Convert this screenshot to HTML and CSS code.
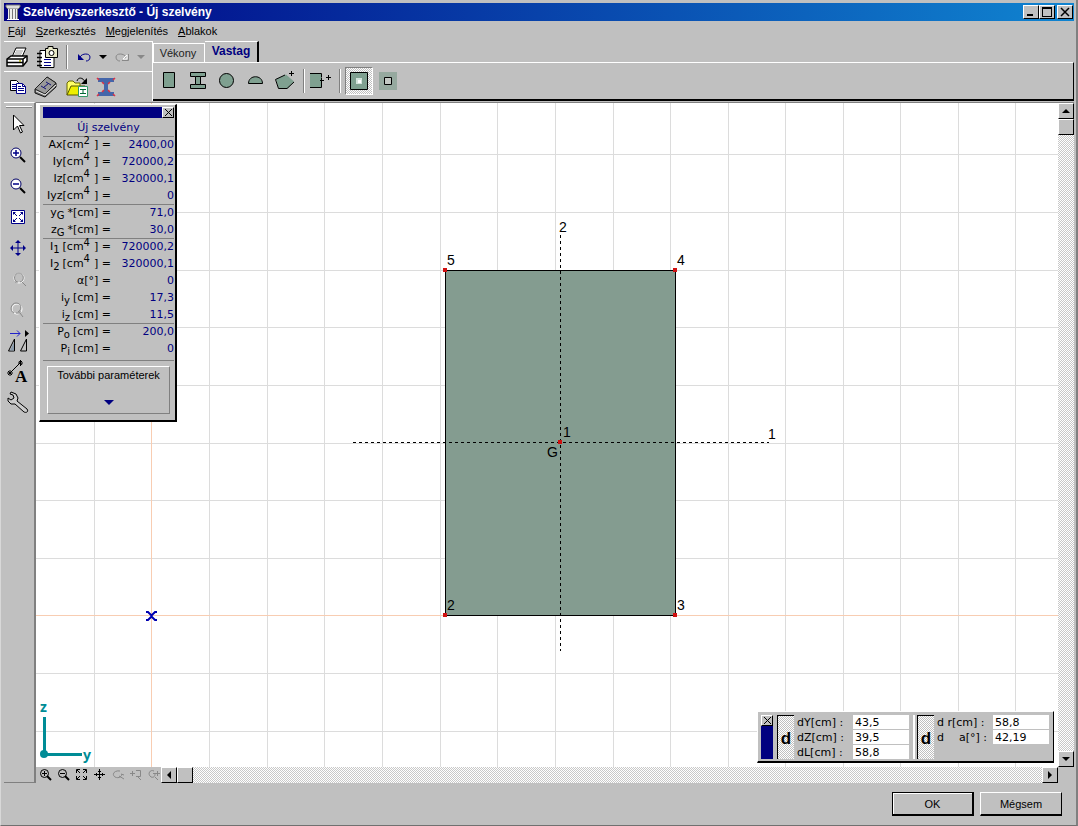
FILE: index.html
```html
<!DOCTYPE html>
<html lang="hu">
<head>
    <meta charset="UTF-8">
    <meta name="viewport" content="width=device-width, initial-scale=1.0">
    <title>Szelvényszerkesztő - Új szelvény</title>
    <link rel="stylesheet" href="styles.css">
</head>
<body>

<header class="titlebar">
    <svg class="app-icon" width="16" height="16" viewBox="0 0 16 16">
        <path d="M1 1h14v2l-2 2H3L1 3z" fill="#ddd" stroke="#777"/>
        <path d="M3 5h10v10H3z" fill="#eee"/>
        <path d="M4.5 5v10M7.5 5v10M10.5 5v10M12.5 5v10" stroke="#777"/>
        <path d="M2 15.500h12" stroke="#fff"/>
    </svg>
    <h1>Szelvényszerkesztő - Új szelvény</h1>
    <div class="window-buttons">
        <button aria-label="Kis méret"><svg width="12" height="10"><path d="M2 7h6v2H2z"/></svg></button>
        <button aria-label="Teljes méret"><svg width="12" height="10"><path d="M1 0h10v10H1zM2 2v7h8V2z" fill-rule="evenodd"/></svg></button>
        <button class="close" aria-label="Bezárás"><svg width="12" height="10"><path d="M2 1l8 8M10 1L2 9" stroke="#000" stroke-width="1.500"/></svg></button>
    </div>
</header>

<nav class="menu">
    <button><u>F</u>ájl</button>
    <button><u>S</u>zerkesztés</button>
    <button><u>M</u>egjelenítés</button>
    <button><u>A</u>blakok</button>
</nav>

<div class="toolbars">
    <div class="main-tools">
        <div class="tool-row">
            <button aria-label="Nyomtatás">
                <svg width="22" height="20" viewBox="0 0 22 20">
                    <path d="M6 10l4-9h10l-4 9z" fill="#fff" stroke="#000"/>
                    <path d="M10 4h7M9 6h7M8 8h7" stroke="#999"/>
                    <path d="M1 12l4-3h16v5l-4 5H1z" fill="#fff" stroke="#000" stroke-width="1.500"/>
                    <path d="M1 12h16l4-3M17 12v7M1 15.500h16" fill="none" stroke="#000" stroke-width="1.500"/>
                    <path d="M13 14h2" stroke="#aa0" stroke-width="1.500"/>
                </svg>
            </button>
            <button aria-label="Rajz mentése">
                <svg width="22" height="22" viewBox="0 0 22 22">
                    <path d="M4 4.500h14v17H4z" fill="#fff" stroke="#000"/>
                    <path d="M1 7.500h5M1 11.500h5M1 15.500h5M1 19.500h5" stroke="#000" stroke-width="1.500"/>
                    <path d="M8 13.500h7M8 16.500h7M8 19.500h7" stroke="#008"/>
                    <path d="M9.500 2.500H12v-2h5v2h4.500v9h-12z" fill="#e8e8c8" stroke="#000"/>
                    <circle cx="15.500" cy="7" r="2.500" fill="#fff" stroke="#000"/>
                </svg>
            </button>
            <span class="separator"></span>
            <button class="undo" aria-label="Visszavonás">
                <svg width="14" height="10" viewBox="0 0 14 10">
                    <path d="M3 5c2-4 10-4 10 0 0 3-2 4-4 4" fill="none" stroke="#008"/>
                    <path d="M1 2v6h6z" fill="#008"/>
                </svg>
            </button>
            <button aria-label="Visszavonás lista"><svg width="8" height="4"><path d="M0 0h8L4 4z"/></svg></button>
            <button class="redo" aria-label="Újra">
                <svg width="14" height="10" viewBox="0 0 14 10">
                    <path d="M11 5C9 1 1 1 1 5c0 3 2 4 4 4" fill="none" stroke="#888"/>
                    <path d="M12 3v4H8z" fill="#aaa" stroke="#fff"/>
                    <path d="M13.500 2v6.500H7" fill="none" stroke="#888"/>
                </svg>
            </button>
            <button aria-label="Újra lista"><svg width="8" height="4"><path d="M0 0h8L4 4z" fill="#888"/></svg></button>
        </div>
        <div class="tool-row second">
            <button aria-label="Másolás">
                <svg width="16" height="14" viewBox="0 0 16 14">
                    <path d="M.5.500h6l2 2v8h-8z" fill="#fff" stroke="#000"/>
                    <path d="M2 4.500h4M2 6.500h4M2 8.500h4" stroke="#008"/>
                    <path d="M6.500 3.500h6l3 3v7h-9z" fill="#fff" stroke="#008"/>
                    <path d="M12.500 4v2.500h3M8 6.500h3M8 8.500h6M8 10.500h6" fill="none" stroke="#008"/>
                </svg>
            </button>
            <button aria-label="Szelvénytár">
                <svg width="24" height="22" viewBox="0 0 24 22">
                    <path d="M1 13L13 1l9 6v4L11 21 1 17z" fill="#777" stroke="#111"/>
                    <path d="M1 13L13 1l9 6-11 11z" fill="#999" stroke="#222"/>
                    <path d="M2 15l9 4L22 9" fill="none" stroke="#eee"/>
                    <path d="M12 6l5 3M7 10l5 3M14.500 7.500l-5 4" stroke="#117"/>
                </svg>
            </button>
            <button aria-label="Szelvény betöltése">
                <svg width="22" height="20" viewBox="0 0 22 20">
                    <path d="M1 18V6l2-2h4l2 2h5v3" fill="#ff6" stroke="#660"/>
                    <path d="M1 18L5 9h14l-5 9z" fill="#ee0" stroke="#550"/>
                    <path d="M11 4c1-4 6-4 8 1" fill="none" stroke="#000"/>
                    <path d="M21 1v6h-6z"/>
                    <path d="M12.500 9.500h9v10h-9z" fill="#fff" stroke="#396"/>
                    <path d="M14 12.500h6M14 16.500h6M17 12v5" stroke="#063"/>
                </svg>
            </button>
            <button aria-label="I szelvény">
                <svg width="20" height="20" viewBox="0 0 20 20">
                    <path d="M2 1h16v4h-4l-2 2v6l2 2h4v4H2v-4h4l2-2V7L6 5H2z" fill="#46a"/>
                    <path d="M1 1l2 2M19 1l-2 2M1 19l2-2M19 19l-2-2M6 5l2 2M14 5l-2 2M6 15l2-2M14 15l-2-2" stroke="#d34" stroke-width="1.500"/>
                </svg>
            </button>
        </div>
    </div>

    <div class="section-tools">
        <div class="tabs" role="tablist">
            <button class="tab" role="tab">Vékony</button>
            <button class="tab active" role="tab" aria-selected="true">Vastag</button>
        </div>
        <div class="tab-panel">
            <div class="shapes">
                <button aria-label="Téglalap"><svg width="20" height="20"><path d="M4.500 1.500h11v15h-11z"/></svg></button>
                <button aria-label="I alak"><svg width="20" height="20"><path d="M2.500 1.500h15v4h-5v8h5v4h-15v-4h5v-8h-5zM7.500 5.500h5M7.500 13.500h5"/></svg></button>
                <button aria-label="Kör"><svg width="20" height="20"><circle cx="9.500" cy="9.500" r="7"/></svg></button>
                <button aria-label="Félkör"><svg width="20" height="20"><path d="M2.500 12.500c0-9 14-9 14 0z"/></svg></button>
                <button aria-label="Sokszög"><svg width="20" height="20"><path d="M1 8l10-4.500 8 7-6 7H3.500z" stroke="none"/><path d="M10 4L.5 8.500l3 9H12l7-6.500" fill="none"/><path d="M16.500 0v5M14 2.500h5"/></svg></button>
            </div>
            <span class="separator"></span>
            <button class="shape-add" aria-label="Szelvény hozzáadása"><svg width="22" height="20"><path d="M1 3h11v14H1z" stroke="none"/><path d="M1 2.500h11.500v4M12.500 12v4.500H1" fill="none"/><path d="M12.500 7v5M11 9.500h4M17 6.500h5M19.500 4v5"/></svg></button>
            <span class="separator"></span>
            <button class="mode pressed" aria-label="Tömör"><svg width="18" height="18"><path d="M.5.500h17v17H.5z"/><path d="M6 6h6v6H6z" fill="#d4e4dc" stroke="none"/><path d="M8 8h3v3H8z" fill="#fff" stroke="none"/></svg></button>
            <button class="mode" aria-label="Lyuk"><svg width="18" height="18"><path d="M0 0h18v18H0z" fill="#96a99f" stroke="none"/><path d="M5.500 5.500h7v7h-7z" fill="#c4c8c4"/></svg></button>
        </div>
    </div>
</div>

<main class="workspace">
    <div class="side-tools">
        <button aria-label="Kijelölés"><svg width="22" height="22"><path d="M6.500 2v15l4-4 3 7 2-1-3-6.500H17z" fill="#fff" stroke="#000"/></svg></button>
        <button aria-label="Nagyítás"><svg width="22" height="22"><circle cx="9" cy="9" r="5" fill="#fff" stroke="#006"/><path d="M13 13l5 5" stroke="#000" stroke-width="2"/><path d="M6 9h6M9 6v6" stroke="#008" stroke-width="1.500"/></svg></button>
        <button aria-label="Kicsinyítés"><svg width="22" height="22"><circle cx="9" cy="9" r="5" fill="#fff" stroke="#006"/><path d="M13 13l5 5" stroke="#000" stroke-width="2"/><path d="M6 9h6" stroke="#008" stroke-width="1.500"/></svg></button>
        <button aria-label="Teljes nézet"><svg width="22" height="22"><path d="M4.500 4.500h13v13h-13z" fill="#fff" stroke="#008"/><path d="M6 6h3L6 9zM16 6v3l-3-3zM6 16v-3l3 3zM16 16h-3l3-3z" fill="#008"/><path d="M7 7l3 3M15 7l-3 3M7 15l3-3M15 15l-3-3" stroke="#008"/></svg></button>
        <button aria-label="Eltolás"><svg width="22" height="22"><path d="M11 4v14M4 11h14" stroke="#008"/><path d="M11 3l3 3H8zM11 19l-3-3h6zM3 11l3-3v6zM19 11l-3 3V8z" fill="#008"/></svg></button>
        <button aria-label="Előző nézet"><svg width="22" height="22"><circle cx="12" cy="10" r="5" fill="none" stroke="#fff"/><path d="M10 14c-4-2-3-9 2-9s6 8 1 9M8 14h3M15 14l4 4" fill="none" stroke="#888"/></svg></button>
        <button aria-label="Következő nézet"><svg width="22" height="22"><circle cx="10" cy="10" r="5" fill="none" stroke="#fff"/><path d="M7 14c-5-2-3-10 2-10 6 0 6 7 2 9M9 14h4v-2M13 14l3 4" fill="none" stroke="#888"/></svg></button>
        <button aria-label="Tükrözés"><svg width="24" height="26"><path d="M4 5.500h10M11 2.500l3 3-3 3" fill="none" stroke="#22c"/><path d="M19 2l4 3.500-4 3.500z"/><path d="M8.500 11v12h-6zM20.500 11v12h-6z" fill="none" stroke="#000"/><path d="M8 14v8.500H4z" fill="#89a"/></svg></button>
        <button aria-label="Méretvonal"><svg width="24" height="26"><path d="M4 14L14 4M1 14h6M4 11v6M2 12l4 4M6 12l-4 4M12 4h5M14.500 1v6M13 2l3 4M16 2l-4 4" stroke="#000"/><text x="9" y="23" class="letter-icon">A</text></svg></button>
        <button aria-label="Beállítások"><svg width="24" height="24"><path d="M5 1l5 2 2 4-1 3 10 8c2 3-1 4-3 3L9 13H5L2 10V7l3 2 3-2-1-3-3-1z" fill="#ccc" stroke="#000"/></svg></button>
    </div>

    <div class="view">
        <div class="drawing">
            <svg class="canvas" width="100%" height="100%">
                <path class="grid" d="M58.500 0v2000M173.500 0v2000M231.500 0v2000M288.500 0v2000M346.500 0v2000M404.500 0v2000M461.500 0v2000M519.500 0v2000M577.500 0v2000M634.500 0v2000M692.500 0v2000M749.500 0v2000M807.500 0v2000M864.500 0v2000M922.500 0v2000M979.500 0v2000"/>
                <path class="grid" d="M0 51.500h3000M0 109.500h3000M0 167.500h3000M0 224.500h3000M0 282.500h3000M0 340.500h3000M0 397.500h3000M0 455.500h3000M0 570.500h3000M0 628.500h3000"/>
                <path class="origin" d="M115.500 0v2000M0 512.500h3000"/>

                <path class="cross" d="M110 509h2l3 3h1l3-3h2M110 517h2l3-3h1l3 3h2"/>
                <rect class="section" x="409.500" y="167.500" width="230" height="345"/>
                <path class="axis" d="M317 339.500h416M524.500 132v416"/>
                <path class="node" d="M407 165h4v4h-4zM637 165h4v4h-4zM407 510h4v4h-4zM637 510h4v4h-4zM522 337h4v4h-4z"/>
                <g class="labels">
                    <text x="523" y="129">2</text>
                    <text x="411" y="162">5</text>
                    <text x="641" y="162">4</text>
                    <text x="411" y="507">2</text>
                    <text x="641" y="507">3</text>
                    <text x="527" y="334">1</text>
                    <text x="511" y="354">G</text>
                    <text x="732" y="336">1</text>
                </g>
            </svg>

            <svg class="axes" width="64" height="80">
                <path d="M8.500 30v38M8 67.500h38" stroke="#008c96" stroke-width="3"/>
                <circle cx="8" cy="67" r="4" fill="#008c96"/>
                <text x="4" y="25">z</text>
                <text x="47" y="73">y</text>
            </svg>

            <section class="params">
                <div class="panel-bar"><button aria-label="Panel bezárása"><svg width="9" height="9"><path d="M1 1l7 7M8 1L1 8" stroke="#000"/></svg></button></div>
                <h2>Új szelvény</h2>
                <table>
                    <tbody>
                        <tr><th>Ax[cm<sup>2</sup>] =</th><td>2400,00</td></tr>
                        <tr><th>Iy[cm<sup>4</sup>] =</th><td>720000,2</td></tr>
                        <tr><th>Iz[cm<sup>4</sup>] =</th><td>320000,1</td></tr>
                        <tr><th>Iyz[cm<sup>4</sup>] =</th><td>0</td></tr>
                    </tbody>
                    <tbody>
                        <tr><th>y<sub>G</sub>*[cm] =</th><td>71,0</td></tr>
                        <tr><th>z<sub>G</sub>*[cm] =</th><td>30,0</td></tr>
                    </tbody>
                    <tbody>
                        <tr><th>I<sub>1</sub>[cm<sup>4</sup>] =</th><td>720000,2</td></tr>
                        <tr><th>I<sub>2</sub>[cm<sup>4</sup>] =</th><td>320000,1</td></tr>
                        <tr><th>α[°] =</th><td>0</td></tr>
                        <tr><th>i<sub>y</sub>[cm] =</th><td>17,3</td></tr>
                        <tr><th>i<sub>z</sub>[cm] =</th><td>11,5</td></tr>
                    </tbody>
                    <tbody>
                        <tr><th>P<sub>o</sub>[cm] =</th><td>200,0</td></tr>
                        <tr><th>P<sub>i</sub>[cm] =</th><td>0</td></tr>
                    </tbody>
                </table>
                <div class="more">
                    <button>További paraméterek<svg width="10" height="5"><path d="M0 0h10L5 5z" fill="#000080"/></svg></button>
                </div>
            </section>

            <section class="coords">
                <div class="coords-bar"><button aria-label="Koordináták bezárása"><svg width="9" height="9"><path d="M1 1l7 7M8 1L1 8" stroke="#000"/></svg></button></div>
                <div class="coord-group">
                    <button class="delta">d</button>
                    <div class="fields">
                        <label for="dy">dY[cm] :</label><input id="dy" type="text" value="43,5">
                        <label for="dz">dZ[cm] :</label><input id="dz" type="text" value="39,5">
                        <label for="dl">dL[cm] :</label><input id="dl" type="text" value="58,8">
                    </div>
                </div>
                <div class="coord-group polar">
                    <button class="delta">d</button>
                    <div class="fields">
                        <label for="dr">d r[cm] :</label><input id="dr" type="text" value="58,8">
                        <label for="da"><span>d</span><span>a[°] :</span></label><input id="da" type="text" value="42,19">
                    </div>
                </div>
            </section>
        </div>

        <div class="scroll-y">
            <button aria-label="Fel"><svg width="8" height="4"><path d="M0 4h8L4 0z"/></svg></button>
            <span class="thumb"></span>
            <button class="last" aria-label="Le"><svg width="8" height="4"><path d="M0 0h8L4 4z"/></svg></button>
        </div>

        <div class="bottom-bar">
            <div class="view-tools">
                <button aria-label="Nagyítás"><svg width="12" height="12"><circle cx="4.500" cy="4.500" r="4"/><path d="M2 4.500h5M4.500 2v5"/><path d="M7 7l4 4" stroke-width="2"/></svg></button>
                <button aria-label="Kicsinyítés"><svg width="12" height="12"><circle cx="4.500" cy="4.500" r="4"/><path d="M2 4.500h5"/><path d="M7 7l4 4" stroke-width="2"/></svg></button>
                <button aria-label="Teljes nézet"><svg width="12" height="12"><path d="M.5 4V.5H4M7 .5h3.500V4M10.500 7v3.500H7M4 10.500H.5V7M1 1l3 3M10 1L7 4M10 10L7 7M1 10l3-3"/></svg></button>
                <button aria-label="Eltolás"><svg width="12" height="12"><path d="M5.500 0v11M0 5.500h11M4 2.500h3M4 8.500h3M2.500 4v3M8.500 4v3"/></svg></button>
                <button class="off" aria-label="Forgatás"><svg width="12" height="12"><path d="M8 2C3 1-1 5 3 8c4 2 7-1 7-3M7 7l5 3M9 5l3 1"/></svg></button>
                <button class="off" aria-label="Előző"><svg width="12" height="12"><path d="M0 4.500h5M2.500 2v5M6 1.500h4.500v6H6M8 8l3 3"/></svg></button>
                <button class="off" aria-label="Következő"><svg width="12" height="12"><path d="M6 2C2 0-1 5 3 8c3 1 4-1 4-3M5 4.500h7M9.500 2v5M7 8l3 3"/></svg></button>
            </div>
            <div class="scroll-x">
                <button aria-label="Balra"><svg width="4" height="8"><path d="M4 0v8L0 4z"/></svg></button>
                <span class="thumb"></span>
                <button class="last" aria-label="Jobbra"><svg width="4" height="8"><path d="M0 0v8l4-4z"/></svg></button>
            </div>
        </div>
        <div class="corner"></div>
    </div>
</main>

<footer class="dialog-buttons">
    <button class="default">OK</button>
    <button>Mégsem</button>
</footer>

</body>
</html>
```

FILE: styles.css
```css
* {
    box-sizing: border-box;
}

body {
    margin: 0;
    padding: 3px 2px 0 3px;
    display: flex;
    flex-direction: column;
    height: 100vh;
    overflow: hidden;
    background-color: #c0c0c0;
    border-left: 1px solid #d8d8d8;
    border-right: 2px solid #808080;
    border-bottom: 1px solid #707070;
    font-family: "Liberation Sans", Arial, sans-serif;
    font-size: 11px;
    color: #000;
}

button {
    display: flex;
    align-items: center;
    justify-content: center;
    padding: 0;
    border: none;
    background: none;
    font: inherit;
    color: inherit;
}

svg {
    display: block;
    flex: none;
}

/* Title bar and menu */
.titlebar {
    display: flex;
    align-items: center;
    height: 18px;
    padding: 0 1px;
    background: linear-gradient(to right, #000084, #1084d0);
    color: #fff;
}

.titlebar h1 {
    flex: 1;
    margin: 0 0 0 2px;
    font-size: 12px;
    line-height: 18px;
}

.window-buttons {
    display: flex;
}

.window-buttons button {
    width: 16px;
    height: 14px;
    background-color: #c0c0c0;
    border: 1px solid;
    border-color: #fff #000 #000 #fff;
}

.window-buttons .close {
    margin-left: 2px;
}

.menu {
    display: flex;
    gap: 10px;
    height: 20px;
    padding-left: 4px;
}

/* Toolbars */
.toolbars {
    display: flex;
    height: 61px;
}

.main-tools {
    width: 148px;
    border-top: 1px solid #fff;
}

.tool-row {
    display: flex;
    align-items: center;
    gap: 8px;
    height: 29px;
    padding-left: 2px;
}

.tool-row.second {
    border-top: 1px solid #fff;
    padding-left: 6px;
    height: 30px;
}

.separator {
    width: 2px;
    height: 24px;
    border-left: 1px solid #808080;
    border-right: 1px solid #fff;
}

.tool-row .undo {
    margin-left: 1px;
}

.section-tools {
    flex: 1;
    display: flex;
    flex-direction: column;
    height: 60px;
    border-left: 1px solid #fff;
}

.tabs {
    display: flex;
    align-items: flex-end;
    height: 21px;
}

.tab {
    width: 52px;
    height: 19px;
    padding-right: 2px;
    border: 1px solid #fff;
    border-bottom: none;
    color: #222;
}

.tab.active {
    width: 54px;
    height: 21px;
    padding: 0 0 3px;
    border-left: none;
    border-right: 2px solid #000;
    color: #000080;
    font-size: 12px;
    font-weight: bold;
}

.tab-panel {
    flex: 1;
    display: flex;
    align-items: center;
    gap: 4px;
    padding-left: 6px;
    border-top: 1px solid #fff;
    border-right: 1px solid #000;
    border-bottom: 2px solid #000;
}

.tab-panel svg {
    fill: #7fa090;
    stroke: #000;
}

.shapes {
    display: flex;
    gap: 9px;
    margin-right: 4px;
}

.shape-add {
    margin-right: 4px;
}

.mode {
    width: 28px;
    height: 28px;
}

.mode.pressed {
    border: 1px solid;
    border-color: #808080 #fff #fff #808080;
    background: repeating-conic-gradient(#fff 0 25%, #c0c0c0 0 50%) 0 0 / 2px 2px;
}

.mode.pressed + .mode {
    width: 22px;
}

/* Workspace */
.workspace {
    flex: 1;
    display: flex;
    min-height: 0;
}

.side-tools {
    display: flex;
    flex-direction: column;
    align-items: center;
    width: 32px;
    padding: 5px 2px 0 0;
    border-top: 1px solid #fff;
    border-right: 2px solid #808080;
    border-bottom: 1px solid #808080;
    background:
        linear-gradient(#fff 1px, transparent 1px) 2px 3px / 26px 2px no-repeat,
        linear-gradient(#888 1px, transparent 1px) 2px 4px / 26px 2px no-repeat;
}

.side-tools button {
    width: 28px;
    height: 31px;
}

.letter-icon {
    font-family: "Liberation Serif", serif;
    font-size: 17px;
    font-weight: bold;
}

.view {
    flex: 1;
    display: grid;
    grid-template-columns: 1fr 16px;
    grid-template-rows: 1fr 16px;
    border-top: 1px solid #808080;
}

.drawing {
    position: relative;
    overflow: hidden;
    background-color: #fff;
}

.canvas {
    position: absolute;
}

.grid {
    stroke: #dcdcdc;
}

.origin {
    fill: none;
    stroke: #f8cdb2;
}

.cross {
    fill: none;
    stroke: #0000b0;
    stroke-width: 2;
}

.section {
    fill: #849c90;
    stroke: #000;
}

.axis {
    stroke: #000;
    stroke-dasharray: 3 3;
}

.node {
    fill: #d01010;
}

.labels {
    font-size: 14px;
}

.axes {
    position: absolute;
    left: 0;
    bottom: 0;
    fill: #008c96;
    font: bold 14px "Noto Sans", sans-serif;
}

/* Cross-section parameters */
.params {
    position: absolute;
    left: 3px;
    top: 1px;
    width: 138px;
    padding: 2px 1px 6px 3px;
    background-color: #c0c0c0;
    border: 1px solid;
    border-color: #fff #000 #000 #fff;
    border-right-width: 2px;
    border-bottom-width: 2px;
    font-family: "DejaVu Sans", Verdana, sans-serif;
    font-size: 11px;
}

.panel-bar {
    display: flex;
    justify-content: flex-end;
    height: 11px;
    background-color: #000080;
}

.panel-bar button,
.coords-bar button {
    width: 12px;
    height: 11px;
    background-color: #c0c0c0;
    border: 1px solid;
    border-color: #fff #000 #000 #fff;
}

.params h2 {
    margin: 0;
    height: 18px;
    font-size: 11px;
    font-weight: normal;
    line-height: 19px;
    text-align: center;
    color: #000080;
}

.params table {
    width: 100%;
    border-collapse: collapse;
    line-height: 16px;
}

.params tbody {
    border-top: 1px solid #808080;
}

.params th,
.params td {
    height: 17px;
    padding: 0;
    font-weight: normal;
    text-align: right;
    white-space: nowrap;
}

.params th {
    width: 68px;
}

.params td {
    color: #000080;
}

.params sup,
.params sub {
    font-size: 10px;
    line-height: 0;
}

.params sup {
    padding-right: 4px;
}

.params sub {
    padding-right: 3px;
}

.more {
    margin-top: 2px;
    padding: 5px 4px 0;
    border-top: 1px solid #808080;
}

.more button {
    flex-direction: column;
    justify-content: flex-start;
    gap: 19px;
    width: 100%;
    height: 48px;
    padding-top: 2px;
    border: 1px solid;
    border-color: #fff #808080 #808080 #fff;
    font-family: "Liberation Sans", Arial, sans-serif;
}

/* Relative coordinates */
.coords {
    position: absolute;
    right: 4px;
    bottom: 4px;
    display: flex;
    height: 52px;
    padding: 3px 4px 2px 3px;
    background-color: #c0c0c0;
    border: 1px solid;
    border-color: #fff #000 #000 #fff;
    border-bottom-width: 2px;
    font-family: "DejaVu Sans", Verdana, sans-serif;
    font-size: 11px;
}

.coords-bar {
    width: 12px;
    margin-right: 4px;
    background-color: #000080;
}

.coord-group {
    display: flex;
    gap: 3px;
}

.coord-group.polar {
    margin-left: 4px;
    padding-left: 2px;
    border-left: 2px solid #fff;
}

.delta {
    width: 17px;
    height: 44px;
    padding-top: 2px;
    background: repeating-conic-gradient(#fff 0 25%, #c0c0c0 0 50%) 0 0 / 2px 2px;
    border-left: 1px solid #000;
    border-top: 1px solid #000;
    font-family: "Liberation Sans", Arial, sans-serif;
    font-size: 17px;
    font-weight: bold;
}

.fields {
    display: grid;
    grid-template-columns: 54px 56px;
    grid-template-rows: 14px 14px 14px;
    gap: 1px 2px;
    line-height: 15px;
}

.fields label {
    display: flex;
    justify-content: space-between;
    white-space: nowrap;
}

.polar .fields label {
    padding-right: 4px;
}

.fields input {
    width: 100%;
    height: 14px;
    padding: 1px 2px 0;
    border: none;
    background-color: #fff;
    font: inherit;
}

/* Scroll bars */
.scroll-y,
.scroll-x {
    display: flex;
    background: repeating-conic-gradient(#fff 0 25%, #c8c8c8 0 50%) 0 0 / 2px 2px;
}

.scroll-y {
    flex-direction: column;
}

.scroll-x {
    flex: 1;
}

.scroll-y button,
.scroll-x button,
.thumb {
    width: 16px;
    height: 16px;
    background-color: #c0c0c0;
    border: 1px solid;
    border-color: #fff #000 #000 #fff;
}

.scroll-y .last {
    margin-top: auto;
}

.scroll-x .last {
    margin-left: auto;
}

.bottom-bar {
    display: flex;
}

.view-tools {
    display: flex;
    gap: 6px;
    padding: 0 1px 0 4px;
}

.view-tools svg {
    fill: none;
    stroke: #000;
}

.view-tools .off svg {
    stroke: #888;
}

/* Dialog buttons */
.dialog-buttons {
    display: flex;
    justify-content: flex-end;
    gap: 6px;
    height: 42px;
    padding: 9px 12px 0 0;
}

.dialog-buttons button {
    width: 82px;
    height: 24px;
    border: 1px solid;
    border-color: #fff #000 #000 #fff;
    border-bottom-width: 2px;
}

.dialog-buttons .default {
    border: 2px solid #000;
    border-top-width: 1px;
    border-left-width: 1px;
    box-shadow: inset 1px 1px #fff;
}
```
